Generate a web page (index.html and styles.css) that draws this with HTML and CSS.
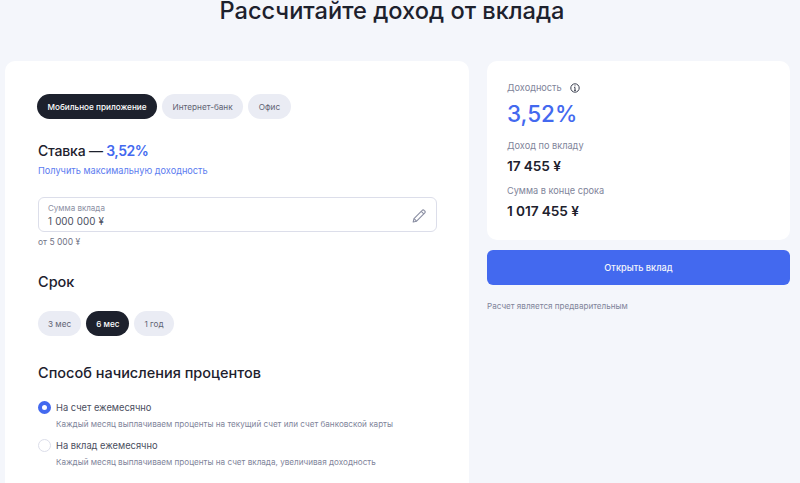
FILE: index.html
```html
<!DOCTYPE html>
<html lang="ru">
<head>
  <meta charset="UTF-8" />
  <meta name="viewport" content="width=device-width, initial-scale=1.0"/>
  <title>Рассчитайте доход от вклада</title>
  <link rel="stylesheet" href="styles.css">
</head>
<body>
  <h1 class="page-title">Рассчитайте доход от вклада</h1>

  <div class="calculator">
    <div class="card form-card">
      <div class="pills channel-pills">
        <button class="pill active">Мобильное приложение</button>
        <button class="pill">Интернет-банк</button>
        <button class="pill">Офис</button>
      </div>

      <h3 class="rate">Ставка — <span class="accent">3,52%</span></h3>
      <a href="#" class="rate-link">Получить максимальную доходность</a>

      <div class="amount-field">
        <div>
          <div class="amount-label">Сумма вклада</div>
          <div class="amount-value">1 000 000 ¥</div>
        </div>
        <svg class="edit-icon" width="16" height="16" viewBox="0 0 16 16" fill="none" stroke="#8b8fa3" stroke-width="1.1" stroke-linejoin="round">
          <path d="M2.2 14 3 10.6 11.2 2.3a1.3 1.3 0 0 1 1.9 0l.7.7a1.3 1.3 0 0 1 0 1.9L5.6 13.2Z"/>
          <path d="M3 10.6 5.6 13.2M10.2 3.3l2.6 2.6"/>
        </svg>
      </div>
      <div class="amount-hint">от 5 000 ¥</div>

      <h2 class="section-title term-title">Срок</h2>
      <div class="pills term-pills">
        <button class="pill">3 мес</button>
        <button class="pill active">6 мес</button>
        <button class="pill">1 год</button>
      </div>

      <h2 class="section-title method-title">Способ начисления процентов</h2>
      <div class="radio-row">
        <span class="radio checked"></span>
        <div>
          <div class="radio-label">На счет ежемесячно</div>
          <div class="radio-desc">Каждый месяц выплачиваем проценты на текущий счет или счет банковской карты</div>
        </div>
      </div>
      <div class="radio-row">
        <span class="radio"></span>
        <div>
          <div class="radio-label">На вклад ежемесячно</div>
          <div class="radio-desc">Каждый месяц выплачиваем проценты на счет вклада, увеличивая доходность</div>
        </div>
      </div>
    </div>

    <div class="side">
      <div class="card result-card">
        <div class="result-label yield-label">
          Доходность
          <svg width="10" height="10" viewBox="0 0 10 10" fill="none" stroke="#3c4050" stroke-width="1">
            <circle cx="5" cy="5" r="4.2"/>
            <path d="M5 4.4v3M4.1 4.4H5M4.1 7.4h1.8"/>
            <path d="M5 2.4v.9"/>
          </svg>
        </div>
        <div class="yield-value">3,52%</div>
        <div class="result-label">Доход по вкладу</div>
        <div class="result-value">17 455 ¥</div>
        <div class="result-label">Сумма в конце срока</div>
        <div class="result-value">1 017 455 ¥</div>
      </div>
      <button class="open-btn">Открыть вклад</button>
      <p class="side-note">Расчет является предварительным</p>
    </div>
  </div>
</body>
</html>
```

FILE: styles.css
```css
html, body {
  height: 483px;
  overflow: hidden;
}

body {
  font-family: 'Inter', 'Liberation Sans', sans-serif;
  background: #f4f6fb;
  color: #1d212d;
  margin: 0;
  padding: 0;
}

.page-title {
  margin: 0;
  padding-right: 16px;
  text-align: center;
  font-size: 23.6px;
  line-height: 21px;
  font-weight: 500;
}

.calculator {
  display: flex;
  align-items: flex-start;
  gap: 18px;
  margin: 40px 10px 0 5px;
}

.card {
  background: #fff;
  border-radius: 10px;
}

.form-card {
  width: 464px;
  flex-shrink: 0;
  height: 460px;
  padding: 33px 32px 0 33px;
  box-sizing: border-box;
}

.pills {
  display: flex;
  gap: 5px;
}

.pill {
  height: 25px;
  padding: 0 10px;
  border: none;
  border-radius: 13px;
  background: #eaecf4;
  color: #5f6373;
  font-family: inherit;
  font-size: 8.2px;
  font-weight: 400;
}

.pill.active {
  background: #1d212d;
  color: #fff;
  font-weight: 500;
}

.channel-pills {
  margin-left: -1px;
}

.channel-pills .pill {
  padding: 0 10.5px;
}

.rate {
  margin: 22px 0 0;
  font-size: 14px;
  line-height: 20px;
  font-weight: 500;
  letter-spacing: -0.2px;
}

.accent {
  color: #4369ef;
  font-weight: 600;
  letter-spacing: -0.5px;
}

.rate-link {
  display: block;
  margin-top: 3px;
  color: #5c7cf0;
  font-size: 9.2px;
  line-height: 14px;
  text-decoration: none;
}

.amount-field {
  display: flex;
  justify-content: space-between;
  align-items: center;
  height: 35px;
  margin-top: 19px;
  padding: 2px 9px 0;
  box-sizing: border-box;
  border: 1px solid #dcdeea;
  border-radius: 6px;
}

.amount-label {
  color: #8b8fa3;
  font-size: 8px;
  line-height: 11px;
}

.amount-value {
  color: #4a4e5e;
  font-size: 9.8px;
  line-height: 15px;
  word-spacing: 0.4px;
}

.amount-hint {
  margin-top: 4px;
  color: #6f7386;
  font-size: 8.5px;
  line-height: 12px;
}

.section-title {
  margin: 0;
  font-size: 14.5px;
  line-height: 20px;
  font-weight: 500;
}

.term-title {
  margin-top: 24px;
}

.term-pills {
  margin-top: 19px;
}

.method-title {
  margin-top: 27px;
}

.radio-row {
  display: flex;
  gap: 5px;
  margin-top: 8px;
}

.method-title + .radio-row {
  margin-top: 18px;
}

.radio {
  width: 13px;
  height: 13px;
  flex-shrink: 0;
  box-sizing: border-box;
  border: 1px solid #dcdeea;
  border-radius: 50%;
}

.radio.checked {
  border: 4px solid #4369ef;
}

.radio-label {
  color: #4a4e5e;
  font-size: 9.3px;
  line-height: 14px;
}

.radio-desc {
  margin-top: 3px;
  color: #80849a;
  font-size: 8.15px;
  line-height: 13px;
}

.side {
  flex: 1;
}

.result-card {
  height: 179px;
  padding: 20px 20px 0;
  box-sizing: border-box;
}

.result-label {
  color: #80849a;
  font-size: 9.2px;
  line-height: 13px;
}

.yield-label {
  display: flex;
  align-items: center;
  gap: 8px;
}

.yield-value {
  margin: 5px 0 10px;
  color: #4369ef;
  font-size: 22.5px;
  line-height: 30px;
  font-weight: 500;
}

.result-value {
  margin: 5px 0 9px;
  font-size: 13.7px;
  line-height: 18px;
  font-weight: 600;
  letter-spacing: -0.1px;
}

.open-btn {
  display: block;
  width: 100%;
  height: 35px;
  margin-top: 10px;
  border: none;
  border-radius: 6px;
  background: #4369ef;
  color: #f4f6fb;
  font-family: inherit;
  font-size: 9.2px;
  font-weight: 500;
}

.side-note {
  margin: 15px 0 0;
  color: #80849a;
  font-size: 8.1px;
  line-height: 12px;
}
```
